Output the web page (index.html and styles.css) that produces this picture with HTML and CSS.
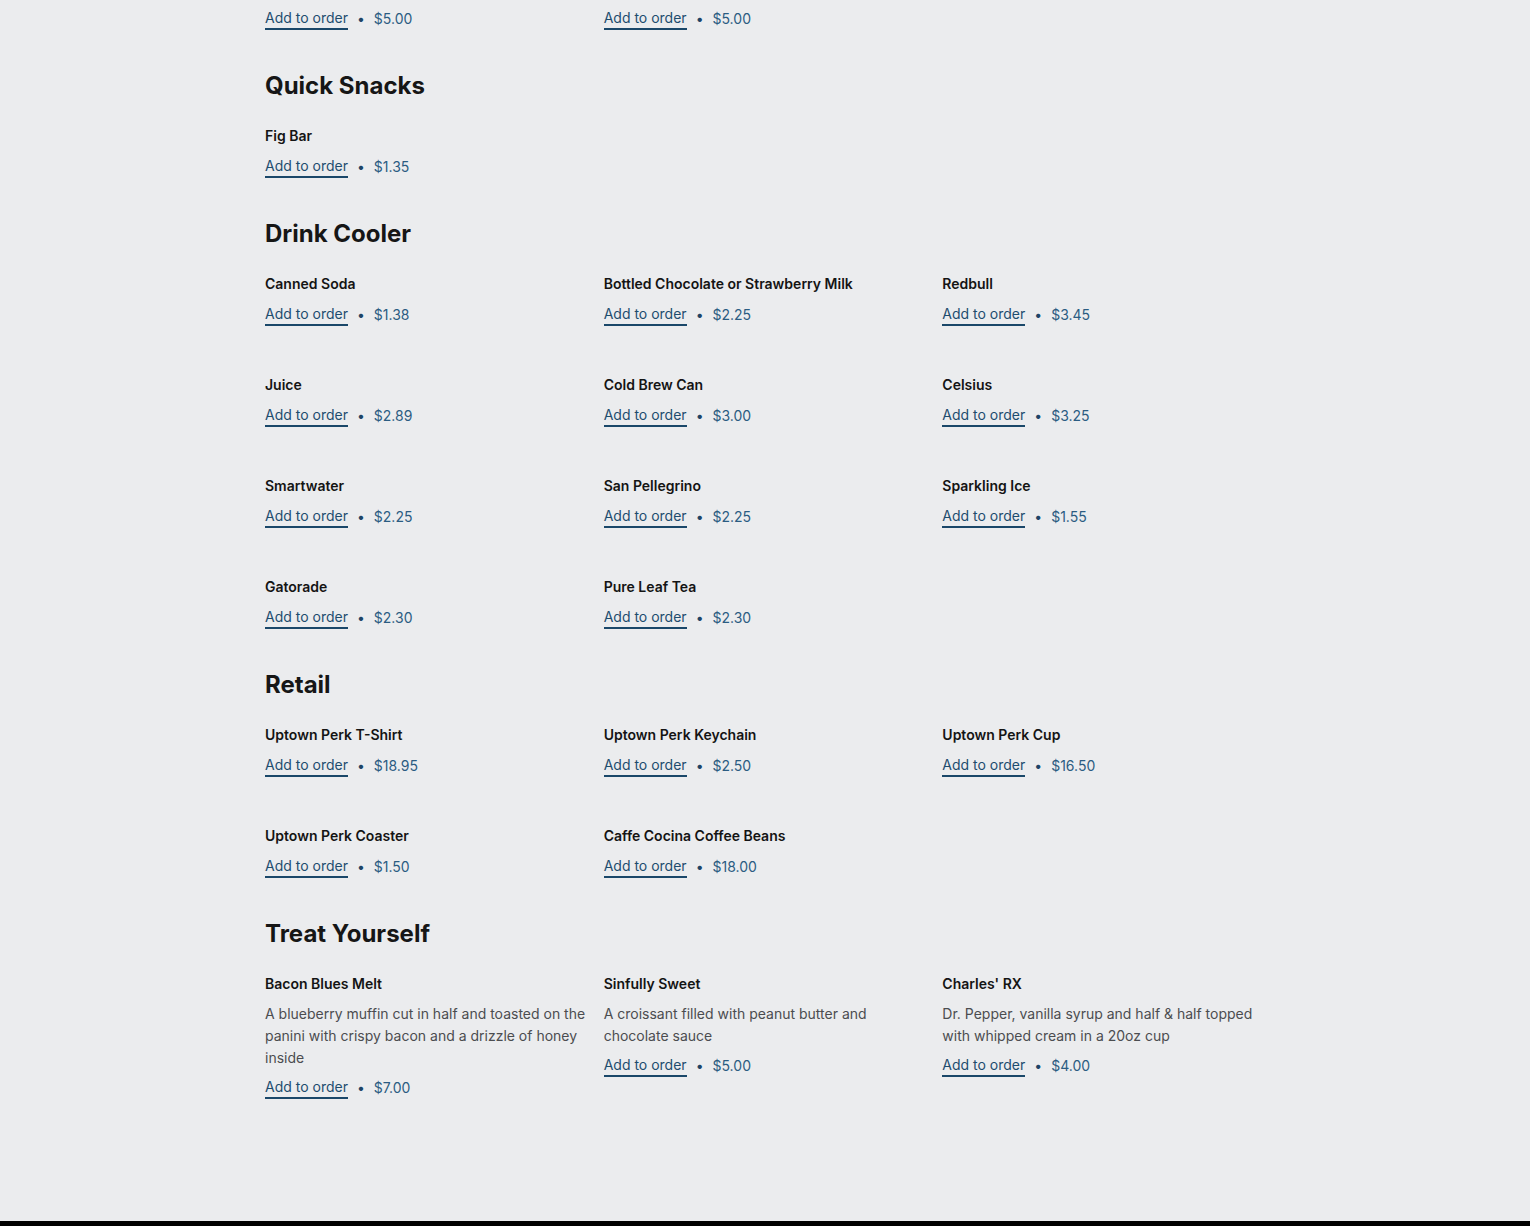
FILE: index.html
```html
<!DOCTYPE html>
<html lang="en">
<head>
<meta charset="utf-8">
<title>Menu</title>
<link rel="stylesheet" href="styles.css">
</head>
<body>
<main class="menu">
  <section class="section section-top">
    <div class="grid">
      <div class="item">
        <div class="order"><a class="add" href="#">Add to order</a><span class="dot">•</span><span class="price">$5.00</span></div>
      </div>
      <div class="item">
        <div class="order"><a class="add" href="#">Add to order</a><span class="dot">•</span><span class="price">$5.00</span></div>
      </div>
    </div>
  </section>

  <section class="section">
    <h2 class="section-title">Quick Snacks</h2>
    <div class="grid">
      <div class="item">
        <h3 class="name">Fig Bar</h3>
        <div class="order"><a class="add" href="#">Add to order</a><span class="dot">•</span><span class="price">$1.35</span></div>
      </div>
    </div>
  </section>

  <section class="section">
    <h2 class="section-title">Drink Cooler</h2>
    <div class="grid">
      <div class="item"><h3 class="name">Canned Soda</h3><div class="order"><a class="add" href="#">Add to order</a><span class="dot">•</span><span class="price">$1.38</span></div></div>
      <div class="item"><h3 class="name">Bottled Chocolate or Strawberry Milk</h3><div class="order"><a class="add" href="#">Add to order</a><span class="dot">•</span><span class="price">$2.25</span></div></div>
      <div class="item"><h3 class="name">Redbull</h3><div class="order"><a class="add" href="#">Add to order</a><span class="dot">•</span><span class="price">$3.45</span></div></div>
      <div class="item"><h3 class="name">Juice</h3><div class="order"><a class="add" href="#">Add to order</a><span class="dot">•</span><span class="price">$2.89</span></div></div>
      <div class="item"><h3 class="name">Cold Brew Can</h3><div class="order"><a class="add" href="#">Add to order</a><span class="dot">•</span><span class="price">$3.00</span></div></div>
      <div class="item"><h3 class="name">Celsius</h3><div class="order"><a class="add" href="#">Add to order</a><span class="dot">•</span><span class="price">$3.25</span></div></div>
      <div class="item"><h3 class="name">Smartwater</h3><div class="order"><a class="add" href="#">Add to order</a><span class="dot">•</span><span class="price">$2.25</span></div></div>
      <div class="item"><h3 class="name">San Pellegrino</h3><div class="order"><a class="add" href="#">Add to order</a><span class="dot">•</span><span class="price">$2.25</span></div></div>
      <div class="item"><h3 class="name">Sparkling Ice</h3><div class="order"><a class="add" href="#">Add to order</a><span class="dot">•</span><span class="price">$1.55</span></div></div>
      <div class="item"><h3 class="name">Gatorade</h3><div class="order"><a class="add" href="#">Add to order</a><span class="dot">•</span><span class="price">$2.30</span></div></div>
      <div class="item"><h3 class="name">Pure Leaf Tea</h3><div class="order"><a class="add" href="#">Add to order</a><span class="dot">•</span><span class="price">$2.30</span></div></div>
    </div>
  </section>

  <section class="section">
    <h2 class="section-title">Retail</h2>
    <div class="grid">
      <div class="item"><h3 class="name">Uptown Perk T-Shirt</h3><div class="order"><a class="add" href="#">Add to order</a><span class="dot">•</span><span class="price">$18.95</span></div></div>
      <div class="item"><h3 class="name">Uptown Perk Keychain</h3><div class="order"><a class="add" href="#">Add to order</a><span class="dot">•</span><span class="price">$2.50</span></div></div>
      <div class="item"><h3 class="name">Uptown Perk Cup</h3><div class="order"><a class="add" href="#">Add to order</a><span class="dot">•</span><span class="price">$16.50</span></div></div>
      <div class="item"><h3 class="name">Uptown Perk Coaster</h3><div class="order"><a class="add" href="#">Add to order</a><span class="dot">•</span><span class="price">$1.50</span></div></div>
      <div class="item"><h3 class="name">Caffe Cocina Coffee Beans</h3><div class="order"><a class="add" href="#">Add to order</a><span class="dot">•</span><span class="price">$18.00</span></div></div>
    </div>
  </section>

  <section class="section">
    <h2 class="section-title">Treat Yourself</h2>
    <div class="grid">
      <div class="item"><h3 class="name">Bacon Blues Melt</h3><p class="desc">A blueberry muffin cut in half and toasted on the panini with crispy bacon and a drizzle of honey inside</p><div class="order"><a class="add" href="#">Add to order</a><span class="dot">•</span><span class="price">$7.00</span></div></div>
      <div class="item"><h3 class="name">Sinfully Sweet</h3><p class="desc">A croissant filled with peanut butter and chocolate sauce</p><div class="order"><a class="add" href="#">Add to order</a><span class="dot">•</span><span class="price">$5.00</span></div></div>
      <div class="item"><h3 class="name">Charles' RX</h3><p class="desc">Dr. Pepper, vanilla syrup and half &amp; half topped with whipped cream in a 20oz cup</p><div class="order"><a class="add" href="#">Add to order</a><span class="dot">•</span><span class="price">$4.00</span></div></div>
    </div>
  </section>
</main>
<footer class="footer"></footer>
</body>
</html>
```

FILE: styles.css
```css
html, body {
  margin: 0;
  padding: 0;
}
body {
  background: #ebecee;
  font-family: Inter, "Noto Sans", "Liberation Sans", sans-serif;
  color: #141414;
}
.menu {
  width: 1000px;
  margin: 0 auto;
  padding: 8px 0 122px;
}
.section {
  margin-bottom: 40px;
}
.section-top {
  margin-bottom: 40px;
}
.section:last-child {
  margin-bottom: 0;
}
.section-title {
  margin: 0 0 24px;
  font-size: 24px;
  line-height: 32px;
  font-weight: 700;
  color: #161616;
}
.grid {
  display: grid;
  grid-template-columns: repeat(3, 1fr);
  column-gap: 16px;
  row-gap: 49px;
}
.item {
  display: flex;
  flex-direction: column;
  align-items: flex-start;
}
.name {
  margin: 0 0 10px;
  font-size: 14px;
  line-height: 20px;
  font-weight: 600;
  color: #141414;
}
.desc {
  margin: -1px 0 8px;
  font-size: 14px;
  line-height: 22px;
  color: #4b4d50;
}
.order {
  display: flex;
  align-items: center;
  font-size: 14px;
  line-height: 20px;
}
.add {
  color: #1e4d6e;
  text-decoration: none;
  border-bottom: 2px solid #1a4769;
}
.dot {
  color: #1e4466;
  margin: 0 9px;
  font-size: 14px;
}
.price {
  color: #2b5c82;
}
.footer {
  height: 60px;
  background: #000;
}
```
